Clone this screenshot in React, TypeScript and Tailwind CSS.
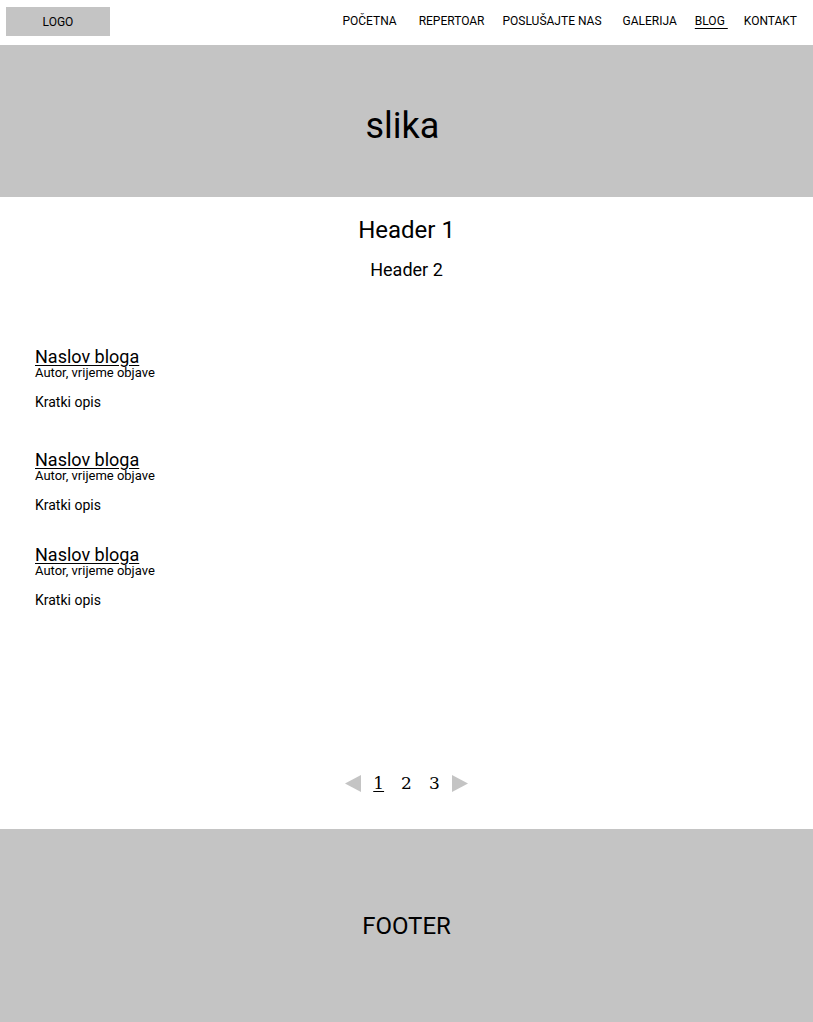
import React from 'react';

const navItems = ['POČETNA', 'REPERTOAR', 'POSLUŠAJTE NAS', 'GALERIJA', 'BLOG', 'KONTAKT'];

const posts = [
  { mt: 'mt-[68px]' },
  { mt: 'mt-[41px]' },
  { mt: 'mt-[33px]' },
];

const Triangle: React.FC<{ dir: 'left' | 'right' }> = ({ dir }) => (
  <svg width="16" height="17" viewBox="0 0 16 17">
    {dir === 'left' ? <polygon points="0,8.5 16,0 16,17" fill="#c4c4c4" /> : <polygon points="16,8.5 0,0 0,17" fill="#c4c4c4" />}
  </svg>
);

export default function App() {
  return (
    <div className="w-[813px] bg-white text-black" style={{ fontFamily: 'Roboto, "Noto Sans", sans-serif' }}>
      {/* header */}
      <header className="h-[45px] flex items-start">
        <div className="ml-[6px] mt-[7px] w-[104px] h-[29px] bg-[#c4c4c4] flex items-center justify-center text-[12px]">LOGO</div>
        <nav className="ml-auto mr-[16px] mt-[14px] flex text-[12px] leading-[14px]">
          {navItems.map((item, i) => (
            <a
              key={item}
              href="#"
              className={
                (item === 'BLOG' ? 'underline underline-offset-[3px] ' : '') +
                (i === 0 ? '' : i === 1 ? 'ml-[22px]' : i === 3 ? 'ml-[21px]' : i === 5 ? 'ml-[16px]' : 'ml-[18px]')
              }
            >
              {item === 'BLOG' ? 'BLOG\u00a0' : item}
            </a>
          ))}
        </nav>
      </header>

      {/* hero */}
      <div className="h-[152px] bg-[#c4c4c4] flex items-center justify-center pt-[10px] pr-[8px]">
        <span className="text-[36px] leading-[42px]">slika</span>
      </div>

      <main className="flex flex-col">
        <h1 className="mt-[19px] text-center text-[24px] leading-[28px]">Header 1</h1>
        <h2 className="mt-[15px] text-center text-[18px] leading-[21px]">Header 2</h2>

        {posts.map((p, i) => (
          <div key={i} className={'pl-[35px] flex flex-col items-start ' + p.mt}>
            <a href="#" className="text-[18px] leading-[18px] underline underline-offset-2">Naslov bloga</a>
            <span className="text-[13px] leading-[14px]">Autor, vrijeme objave</span>
            <p className="mt-[14px] text-[14px] leading-[16px]">Kratki opis</p>
          </div>
        ))}

        <div className="mt-[165px] mb-[36px] h-[20px] flex items-center justify-center">
          <Triangle dir="left" />
          <div className="flex gap-[17px] mx-[12px] text-[17px] leading-[20px]" style={{ fontFamily: '"DejaVu Serif", serif' }}>
            <a href="#" className="underline underline-offset-2">1</a>
            <a href="#">2</a>
            <a href="#">3</a>
          </div>
          <Triangle dir="right" />
        </div>
      </main>

      {/* footer */}
      <footer className="h-[193px] bg-[#c4c4c4] flex items-center justify-center">
        <span className="text-[24px] leading-[28px]">FOOTER</span>
      </footer>
    </div>
  );
}
